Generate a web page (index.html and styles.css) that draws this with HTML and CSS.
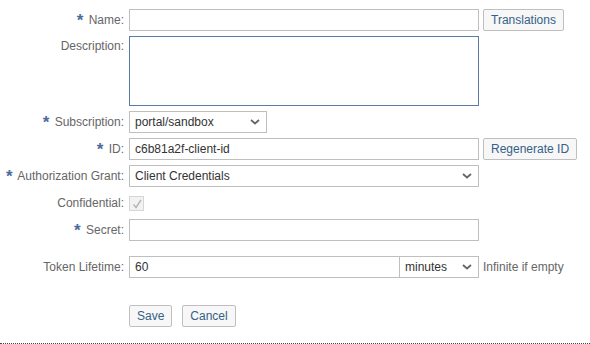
FILE: index.html
```html
<!DOCTYPE html>
<html lang="en">

<head>
    <meta name="viewport" content="width=device-width, initial-scale=1.0">
    <link rel="stylesheet" href="styles.css">
</head>

<body>
    <form class="client-form">
        <div class="row">
            <label class="lbl"><span class="req">*</span> Name:</label>
            <div class="field">
                <input class="txt wide" type="text">
                <button type="button" class="btn">Translations</button>
            </div>
        </div>

        <div class="row row-top">
            <label class="lbl">Description:</label>
            <div class="field">
                <textarea class="area wide"></textarea>
            </div>
        </div>

        <div class="row">
            <label class="lbl"><span class="req">*</span> Subscription:</label>
            <div class="field">
                <span class="sel-wrap sub">
                    <select class="sel"><option>portal/sandbox</option></select>
                    <svg class="chev" width="10" height="6" viewBox="0 0 10 6"><path d="M1 1l4 3.5L9 1" fill="none" stroke="#666" stroke-width="1.8"/></svg>
                </span>
            </div>
        </div>

        <div class="row">
            <label class="lbl"><span class="req">*</span> ID:</label>
            <div class="field">
                <input class="txt wide" type="text" value="c6b81a2f-client-id">
                <button type="button" class="btn">Regenerate ID</button>
            </div>
        </div>

        <div class="row">
            <label class="lbl"><span class="req">*</span> Authorization Grant:</label>
            <div class="field">
                <span class="sel-wrap wide">
                    <select class="sel"><option>Client Credentials</option></select>
                    <svg class="chev" width="10" height="6" viewBox="0 0 10 6"><path d="M1 1l4 3.5L9 1" fill="none" stroke="#666" stroke-width="1.8"/></svg>
                </span>
            </div>
        </div>

        <div class="row">
            <label class="lbl">Confidential:</label>
            <div class="field">
                <span class="check">
                    <svg width="12" height="12" viewBox="0 0 12 12"><path d="M2.5 6.5l2.5 3L10 2" fill="none" stroke="#b5b5b5" stroke-width="1.4"/></svg>
                </span>
            </div>
        </div>

        <div class="row">
            <label class="lbl"><span class="req">*</span> Secret:</label>
            <div class="field">
                <input class="txt wide" type="password">
            </div>
        </div>

        <div class="row row-token">
            <label class="lbl">Token Lifetime:</label>
            <div class="field">
                <input class="txt lifetime" type="text" value="60">
                <span class="sel-wrap unit">
                    <select class="sel"><option>minutes</option></select>
                    <svg class="chev" width="10" height="6" viewBox="0 0 10 6"><path d="M1 1l4 3.5L9 1" fill="none" stroke="#666" stroke-width="1.8"/></svg>
                </span>
                <span class="hint">Infinite if empty</span>
            </div>
        </div>

        <div class="row row-actions">
            <span class="lbl"></span>
            <div class="field actions">
                <button type="button" class="btn">Save</button>
                <button type="button" class="btn">Cancel</button>
            </div>
        </div>
    </form>
</body>

</html>
```

FILE: styles.css
```css
* {
    box-sizing: border-box;
}

body {
    margin: 0;
    font-family: "Liberation Sans", Arial, sans-serif;
    font-size: 12px;
    color: #666;
    background: #fff;
}

/* Form layout */
.client-form {
    display: flex;
    flex-direction: column;
    gap: 5px;
    padding-top: 9px;
    height: 344px;
    border-bottom: 1px dotted #444;
}

.row {
    display: flex;
    align-items: center;
    min-height: 22px;
}

.row-top {
    align-items: flex-start;
}

.row-token {
    margin-top: 10px;
}

.row-actions {
    margin-top: 22px;
}

.lbl {
    width: 125px;
    flex: none;
    text-align: right;
    padding-right: 1px;
    white-space: nowrap;
}

.row-top .lbl {
    padding-top: 3px;
}

.req {
    color: #4a6b9c;
    font-weight: bold;
    font-size: 17px;
    line-height: 10px;
    vertical-align: -2px;
    margin-right: 2px;
}

.field {
    display: flex;
    align-items: center;
    gap: 4px;
    margin-left: 4px;
}

/* Inputs */
.txt,
.area,
.sel {
    font-family: inherit;
    font-size: 12px;
    color: #333;
    border: 1px solid #bfbfbf;
    background: #fff;
    border-radius: 0;
    outline: none;
}

.txt {
    height: 22px;
    padding: 0 5px;
}

.wide {
    width: 350px;
}

.area {
    height: 70px;
    border-color: #5b7aa6;
    resize: none;
    margin: 0;
    display: block;
}

.lifetime {
    width: 271px;
}

.sel-wrap {
    position: relative;
    display: inline-block;
}

.sel {
    appearance: none;
    -webkit-appearance: none;
    width: 100%;
    height: 22px;
    padding: 0 20px 0 5px;
    display: block;
}

.sel-wrap.sub {
    width: 138px;
}

.sel-wrap.unit {
    width: 80px;
    margin-left: -5px;
}

.chev {
    position: absolute;
    right: 7px;
    top: 8px;
    pointer-events: none;
}

.hint {
    color: #666;
}

/* Disabled checkbox */
.check {
    display: flex;
    align-items: center;
    justify-content: center;
    width: 15px;
    height: 15px;
    border: 1px solid #d6d6d6;
    background: #f2f2f2;
    margin-top: 1px;
}

/* Buttons */
.btn {
    font-family: inherit;
    font-size: 12px;
    color: #346187;
    background: #f7f7f7;
    border: 1px solid #bfbfbf;
    border-radius: 2px;
    height: 22px;
    padding: 0 7px;
    cursor: pointer;
}

.actions {
    gap: 10px;
}
```
